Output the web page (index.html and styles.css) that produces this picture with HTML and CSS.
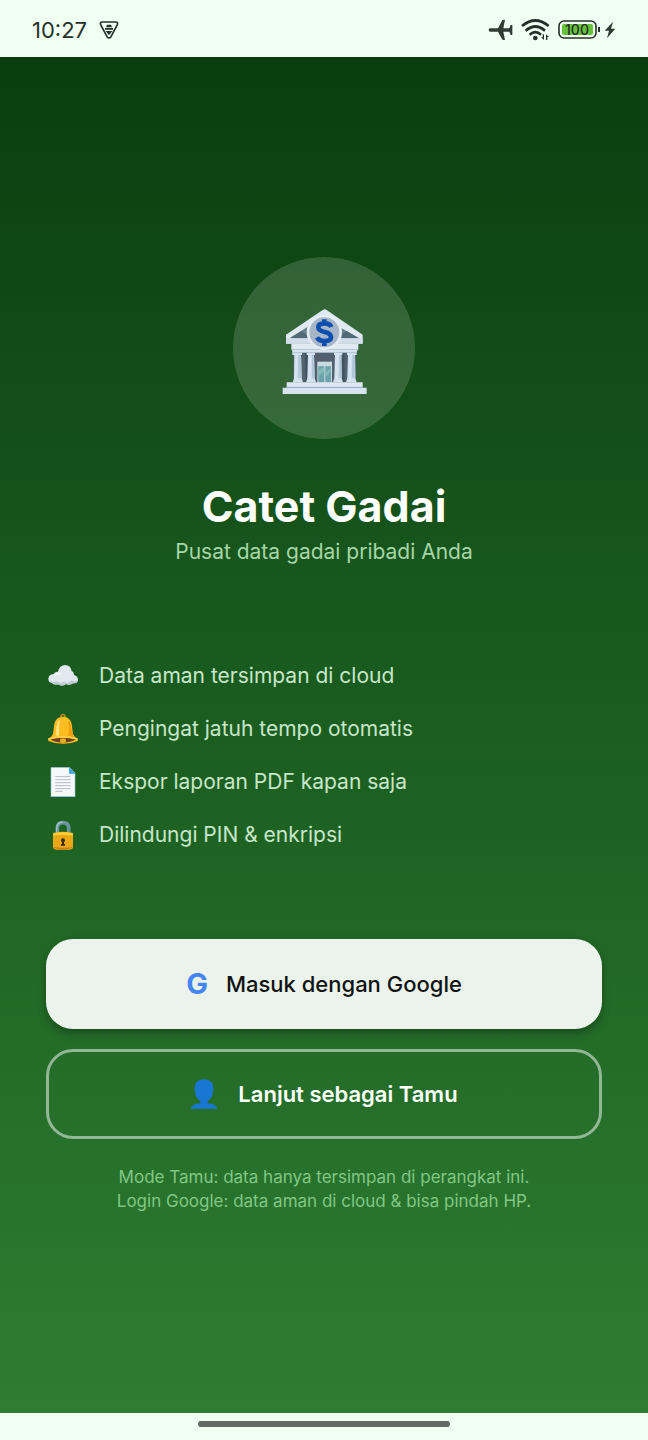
FILE: index.html
```html
<!DOCTYPE html>
<html lang="id">
<head>
<meta charset="utf-8">
<meta name="viewport" content="width=device-width, initial-scale=1">
<title>Catet Gadai</title>
<link rel="stylesheet" href="styles.css">
</head>
<body>
<header class="status">
  <div class="status-group">
    <time class="clock">10:27</time>
    <svg class="shield" width="20" height="20" viewBox="0 0 60 60" aria-hidden="true">
      <path d="M10 6h40q8 0 5 8L36 50q-6 8-12 0L5 14q-3-8 5-8z" fill="none" stroke="#26302a" stroke-width="5"/>
      <path d="M24 14h12l3 8H21zM18 24h24v5H18zM20 33h20L30 46z" fill="#26302a"/>
    </svg>
  </div>
  <div class="status-group status-right">
    <svg width="25" height="22" viewBox="0 0 75 66" aria-hidden="true">
      <path d="M3 29Q3 28 6 28L30 28 42 5Q43 2 47 2L51 2 46 28 64 28 68 18 73 18 73 48 68 48 64 38 46 38 51 63 47 63Q43 63 42 60L30 38 6 38Q2 37 2 33z" fill="#303b34"/>
    </svg>
    <svg width="29" height="22" viewBox="0 0 87 66" aria-hidden="true">
      <g fill="none" stroke="#26302a" stroke-width="8">
        <path d="M3 21Q43-12 83 21"/><path d="M14 35Q43 10 72 35"/><path d="M26 47Q43 32 60 47"/>
      </g>
      <circle cx="43" cy="57" r="7" fill="#26302a"/>
      <path d="M69 46v17l-9-8h5v-9zM75 63V46l9 8h-5v9z" fill="#26302a"/>
    </svg>
    <div class="power">
      <svg width="42" height="20" viewBox="0 0 42 20" role="img" aria-label="Baterai 100">
        <rect x="1" y="1" width="37" height="17" rx="5" fill="#effff2" stroke="#26302a" stroke-width="1.6"/>
        <rect x="4" y="4" width="31" height="11" rx="2" fill="#66c23a"/>
        <path d="M41 7v5" stroke="#26302a" stroke-width="2"/>
        <text class="battery-text" x="19" y="15" text-anchor="middle">100</text>
      </svg>
      <svg width="12" height="18" viewBox="0 0 36 54" aria-hidden="true">
        <path d="M27 2 2 29h13L9 52 34 23H21z" fill="#303b34"/>
      </svg>
    </div>
  </div>
</header>

<main class="screen">
  <div class="logo">
    <svg width="85" height="85" viewBox="0 0 255 255" role="img" aria-label="Bank">
      <path d="M34 128h188v94H34z" fill="#54626e"/>
      <path d="M96 130h64v90H96z" fill="#536070"/>
      <path d="M106 158h44v64h-44z" fill="#c9dbe0"/>
      <path d="M109 172h18v50h-18zM130 172h17v50h-17z" fill="#6ca3aa"/>
      <path d="M110 184l16-10v12l-16 16zM131 190l15-12v10l-15 16z" fill="#85b8ba"/>
      <path d="M69 130h9v90h-9zM180 130h8v90h-8z" fill="#405461"/>
      <g fill="#d4e2ef">
        <path d="M31 126h29v12h-3l2 70 4 12H32l4-12 1-70h-6z"/>
        <path d="M74 126h25v12h-3l2 70 4 12H72l4-12 2-70h-4z"/>
        <path d="M156 126h25v12h-3l1 70 4 12h-30l4-12 2-70h-3z"/>
        <path d="M195 126h29v12h-5l1 70 4 12h-32l4-12 2-70h-3z"/>
      </g>
      <path d="M49 138h8l2 70H47zM90 138h6l2 70h-9zM171 138h7l1 70h-9zM211 138h8l1 70h-11z" fill="#b2c8db"/>
      <path d="M12 77 122 3q6-5 12 0l108 74v27H12z" fill="#dfe9f1"/>
      <path d="M23 88 122 25 231 88z" fill="#687f8e"/>
      <path d="M23 88 58 66 88 88zM231 88l-37-22-30 22z" fill="#526a77"/>
      <path d="M12 88h230v16H12z" fill="#d1deea"/>
      <path d="M28 105h201v15l-6 10H34l-6-10z" fill="#e1eaf2"/>
      <path d="M28 122h201M32 130h192" stroke="#adc1d2" stroke-width="3"/>
      <circle cx="127" cy="70" r="49" fill="#a7b7c7" stroke="#e5edf4" stroke-width="8"/>
      <path d="M148 54Q144 43 127 43 109 43 109 55 109 65 128 69 147 73 147 84 147 96 127 96 111 96 105 85M127 31v14M127 95v16" fill="none" stroke="#0c4fae" stroke-width="14"/>
      <path d="M14 220h228v17H14z" fill="#e0e9f3"/>
      <path d="M2 236h252v19H2z" fill="#d7e4ef"/>
      <path d="M13 235h230" stroke="#8ea7bc" stroke-width="3"/>
    </svg>
  </div>
  <h1 class="title">Catet Gadai</h1>
  <p class="subtitle">Pusat data gadai pribadi Anda</p>

  <ul class="features">
    <li class="feature">
      <svg class="feature-icon" viewBox="0 0 90 90" aria-hidden="true">
        <path d="M12 66Q1 64 1 53 2 40 17 39 22 31 30 32 35 12 51 12 68 12 71 31 77 31 78 42 90 45 90 57 89 68 75 67 66 74 54 69 43 78 30 70 18 73 12 66z" fill="#e1e8f0"/>
        <path d="M6 58Q13 67 23 60 36 69 48 62 62 70 70 58 82 64 89 57 87 68 75 67 66 74 54 69 43 78 30 70 10 72 6 58z" fill="#c0cad6"/>
        <path d="M20 43Q31 33 39 43" fill="none" stroke="#f2f5f9" stroke-width="5"/>
      </svg>
      <span>Data aman tersimpan di cloud</span>
    </li>
    <li class="feature">
      <svg class="feature-icon" viewBox="0 0 90 90" aria-hidden="true">
        <circle cx="45" cy="8" r="6" fill="none" stroke="#d39b20" stroke-width="4"/>
        <path d="M45 8Q67 9 71 30L75 60Q78 68 89 75V81Q70 89 45 89T1 81V75Q12 68 15 60L19 30Q23 9 45 8z" fill="#ffbd22"/>
        <path d="M30 22Q23 40 23 64L33 66Q32 39 36 19z" fill="#ffe279"/>
        <path d="M66 24Q70 50 77 69L61 66Q65 46 60 21z" fill="#f49d12"/>
        <path d="M7 76Q45 65 83 76 70 86 45 86T7 76z" fill="#713f19"/>
        <path d="M1 75Q45 62 89 75" fill="none" stroke="#ffd24c" stroke-width="5"/>
        <ellipse cx="45" cy="80" rx="9" ry="7" fill="#edac20"/>
      </svg>
      <span>Pengingat jatuh tempo otomatis</span>
    </li>
    <li class="feature">
      <svg class="feature-icon" viewBox="0 0 90 90" aria-hidden="true">
        <path d="M8 1h57l17 17v72H8z" fill="#94c4dc"/>
        <path d="M10 2h53v18h17v67H10z" fill="#f6f8fc"/>
        <path d="M63 1l20 19H63z" fill="#40a9e0"/>
        <path d="M22 29h46M22 38h46M22 47h46M22 56h46M22 65h46M22 73h22" stroke="#b6bcc3" stroke-width="3"/>
      </svg>
      <span>Ekspor laporan PDF kapan saja</span>
    </li>
    <li class="feature">
      <svg class="feature-icon" viewBox="0 0 90 90" aria-hidden="true">
        <path d="M28 43V24Q28 8 45 8T62 24v19" fill="none" stroke="#6995a0" stroke-width="11"/>
        <path d="M26 43V24Q27 7 44 6" fill="none" stroke="#a1bec5" stroke-width="4"/>
        <path d="M15 39Q45 32 75 39V83Q74 88 65 89H25Q16 88 15 83z" fill="#eaa716"/>
        <path d="M15 41Q45 33 75 41V47Q45 42 15 47z" fill="#ffd03a"/>
        <path d="M17 81Q45 86 73 81V84Q45 92 17 84z" fill="#ca7e13"/>
        <circle cx="45" cy="61" r="6" fill="#3b2e16"/>
        <path d="M42 63h6v9h3v5H39v-5h3z" fill="#3b2e16"/>
      </svg>
      <span>Dilindungi PIN &amp; enkripsi</span>
    </li>
  </ul>

  <div class="actions">
    <button class="button button-google" type="button">
      <span class="google-mark" aria-hidden="true">G</span>
      <span>Masuk dengan Google</span>
    </button>
    <button class="button button-guest" type="button">
      <svg width="28" height="30" viewBox="0 0 84 90" aria-hidden="true">
        <path d="M42 1C61 1 71 13 70 30L68 46Q65 59 53 66V73Q79 75 82 89H2Q5 75 31 73V66Q19 59 16 46L14 30C13 13 23 1 42 1z" fill="#1976d2"/>
      </svg>
      <span>Lanjut sebagai Tamu</span>
    </button>
  </div>
  <p class="note">Mode Tamu: data hanya tersimpan di perangkat ini.<br>Login Google: data aman di cloud &amp; bisa pindah HP.</p>
</main>
<footer class="nav"><div class="handle"></div></footer>
</body>
</html>
```

FILE: styles.css
```css
* { box-sizing: border-box; }

body {
  margin: 0;
  min-height: 100vh;
  display: flex;
  flex-direction: column;
  background: #effff1;
  font-family: Inter, "Noto Sans", sans-serif;
}

.status {
  height: 57px;
  padding: 3px 32px 0;
  display: flex;
  align-items: center;
  justify-content: space-between;
  color: #26302a;
}

.status-group { display: flex; align-items: center; gap: 12px; }
.status-right { gap: 8px; }
.power { display: flex; align-items: center; gap: 4px; }
.clock { font-size: 22px; line-height: 28px; }
.battery-text { font-size: 14px; font-weight: 500; fill: #26302a; }

.screen {
  flex: 1;
  display: flex;
  flex-direction: column;
  align-items: center;
  justify-content: center;
  padding: 40px 46px;
  background: linear-gradient(#0a3d0f, #1b5e20 50%, #2e7d32);
}

.logo {
  width: 182px;
  height: 182px;
  padding-top: 7px;
  display: flex;
  align-items: center;
  justify-content: center;
  border-radius: 50%;
  background: rgba(255, 255, 255, 0.15);
}

.title {
  margin: 42px 0 0;
  font-size: 43px;
  line-height: 50px;
  font-weight: 700;
  color: #fff;
}

.subtitle {
  margin: 0;
  font-size: 21px;
  line-height: 42px;
  color: #a5d6a7;
}

.features {
  align-self: stretch;
  margin: 85px 0 0;
  padding: 0 2px;
  display: flex;
  flex-direction: column;
  gap: 17px;
  list-style: none;
}

.feature {
  display: flex;
  align-items: center;
  gap: 21px;
  font-size: 21px;
  line-height: 36px;
  color: #c8e6c9;
}

.feature-icon { width: 30px; height: 30px; flex: none; }

.actions {
  align-self: stretch;
  margin-top: 86px;
  display: flex;
  flex-direction: column;
  gap: 20px;
}

.button {
  width: 100%;
  height: 90px;
  display: flex;
  align-items: center;
  justify-content: center;
  border-radius: 27px;
  font-family: inherit;
  font-size: 22px;
  line-height: 32px;
}

.button-google {
  gap: 18px;
  border: 0;
  background: #ebf3ec;
  color: #101311;
  font-weight: 500;
  box-shadow: 0 4px 8px rgba(0, 0, 0, 0.3);
}

.google-mark { font-size: 29px; font-weight: 700; color: #4285f4; }

.button-guest {
  gap: 20px;
  border: 3px solid rgba(255, 255, 255, 0.5);
  background: transparent;
  color: #fff;
  font-weight: 600;
}

.note {
  margin: 26px 0 0;
  font-size: 17px;
  line-height: 24px;
  text-align: center;
  color: #81c784;
}

.nav {
  height: 27px;
  padding-top: 8px;
  display: flex;
  justify-content: center;
}

.handle { width: 39%; height: 6px; border-radius: 3px; background: #626862; }
```
